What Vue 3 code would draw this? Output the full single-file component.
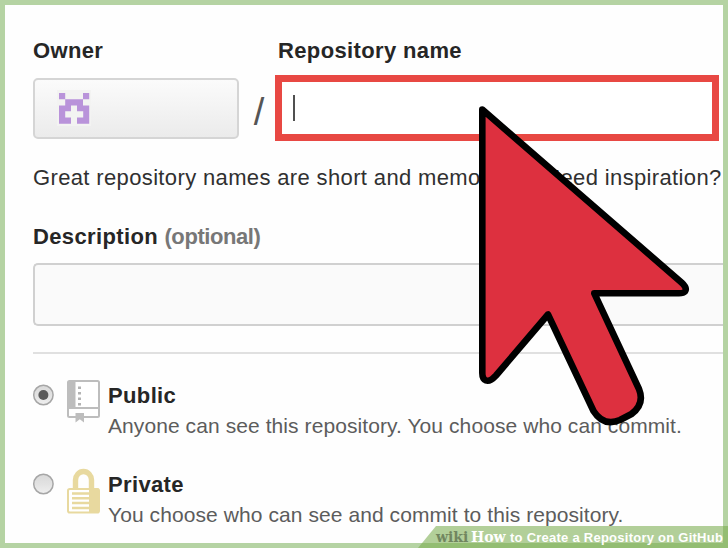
<script setup>
import { ref } from 'vue'

const visibility = ref('public')
const options = [
  { id: 'public', name: 'Public', note: 'Anyone can see this repository. You choose who can commit.' },
  { id: 'private', name: 'Private', note: 'You choose who can see and commit to this repository.' },
]
</script>

<template>
  <div class="frame">
    <form class="form" @submit.prevent>
      <div class="names">
        <div class="owner">
          <div class="label">Owner</div>
          <div class="owner-button">
            <svg class="avatar" width="34" height="36" viewBox="0 0 34 36">
              <rect width="34" height="36" fill="#f3f3f2" />
              <path fill="#b993da" d="M2 3h6.200v6.200H2zM26 3h6.200v6.200H26zM8.200 9.200H26v6.200h6.200v18.300H20v-6.200h6.200v-6.200H20v-5.900h-6v5.900H8.200v6.200H14v6.200H2V15.400h6.200z" />
            </svg>
          </div>
        </div>
        <div class="slash">/</div>
        <div class="repo">
          <div class="label repo-label">Repository name</div>
          <div class="repo-input"><span class="caret"></span></div>
        </div>
      </div>
      <p class="hint">Great repository names are short and memorable. Need inspiration?</p>
      <div class="label">Description <span class="optional">(optional)</span></div>
      <div class="description"></div>
      <div class="rule"></div>
      <div class="options">
        <div v-for="o in options" :key="o.id" class="option" @click="visibility = o.id">
          <svg class="radio" width="22" height="22" viewBox="0 0 22 22">
            <defs>
              <linearGradient :id="'shade-' + o.id" x1="0" y1="0" x2="0" y2="1">
                <stop offset="0" stop-color="#d9d9d9" />
                <stop offset=".5" stop-color="#e2e2e2" />
                <stop offset="1" stop-color="#efefef" />
              </linearGradient>
            </defs>
            <circle cx="11.400" cy="11" r="9.700" :fill="`url(#shade-${o.id})`" stroke="#a6a6a6" stroke-width="1.500" />
            <circle v-if="visibility === o.id" cx="11.400" cy="11" r="5" fill="#5b5b5b" />
          </svg>
          <svg v-if="o.id === 'public'" class="icon" width="33" height="46" viewBox="0 0 33 46">
            <rect x="1" y="2" width="31" height="36" rx="1.500" fill="#fff" stroke="#bdbdbd" stroke-width="2" />
            <path fill="#bdbdbd" d="M1 2h7.500v27.500H1zM1 28h31v2H1zM8.500 34h8.500v9.500l-4.200-3.300-4.300 3.300z" />
            <path fill="#b3b3b3" d="M11 7.500h3v2.600h-3zM11 13h3v2.600h-3zM11 18.500h3v2.600h-3zM11 24h3v2.600h-3z" />
          </svg>
          <svg v-else class="icon" width="33" height="46" viewBox="0 0 33 46">
            <path d="M8.500 21.500V12a8 8.500 0 0 1 16 0v9.500" fill="none" stroke="#e8d99f" stroke-width="5.400" />
            <rect x="1" y="21" width="31" height="23.500" rx="1.800" fill="#fff" stroke="#e8d99f" stroke-width="2" />
            <path fill="#e8d99f" d="M22 20.500h10v24H22zM5 24.300h17v2.500H5zM5 29h17v2.500H5zM5 33.800h17v2.500H5zM5 38.700h17v2.500H5z" />
          </svg>
          <div class="text">
            <div class="label">{{ o.name }}</div>
            <div class="note">{{ o.note }}</div>
          </div>
        </div>
      </div>
    </form>

    <svg class="pointer" width="220" height="330" viewBox="474 100 220 330">
      <path
        d="M482.300 109.500L681.500 282.500Q687.500 288 685 291.500Q683.500 293.300 679 293.300H594.300L639 389Q645 404 631.500 414L620 420Q603.500 427 593.500 411L548 314.500L496 375.500Q490 382 486 380.500Q482.300 379 482.300 373Z"
        fill="#dd303f" stroke="#000" stroke-width="6.600" stroke-linejoin="round"
      />
    </svg>

    <div class="watermark">
      <span class="wiki">wiki</span><span class="how">How</span><span class="title">to Create a Repository on GitHub</span>
    </div>
  </div>
</template>

<style>
body {
  margin: 0;
  background: #fff;
}
</style>

<style scoped>
.frame {
  position: relative;
  box-sizing: border-box;
  width: 728px;
  height: 548px;
  border: 5px solid #b5d3a3;
  background: #fefefe;
  font-family: "Liberation Sans", Arial, sans-serif;
  white-space: nowrap;
}
.form {
  box-sizing: border-box;
  height: 538px;
  padding: 33px 0 0 28px;
  overflow: hidden;
}
.label {
  font-size: 22px;
  line-height: 26px;
  font-weight: 700;
  letter-spacing: 0.36px;
  color: #262626;
}
.names {
  display: flex;
  height: 103px;
}
.owner {
  width: 206px;
}
.owner-button {
  display: flex;
  align-items: center;
  box-sizing: border-box;
  height: 61px;
  margin-top: 14px;
  padding: 0 0 2px 22px;
  border: 2px solid #d5d5d5;
  border-radius: 5px;
  background: linear-gradient(#fbfbfb, #ebebeb);
}
.avatar {
  display: block;
}
.slash {
  width: 36px;
  padding-top: 53px;
  font-size: 38px;
  line-height: 42px;
  text-align: center;
  text-indent: 4px;
  color: #555;
}
.repo {
  width: 444px;
}
.repo-label {
  padding-left: 3px;
}
.repo-input {
  display: flex;
  align-items: center;
  box-sizing: border-box;
  height: 66px;
  margin-top: 11px;
  padding-left: 11px;
  border: 7px solid #e84843;
  background: #fff;
}
.caret {
  width: 2px;
  height: 26px;
  background: #505050;
}
.hint {
  margin: 24px 0 33px;
  font-size: 22px;
  line-height: 26px;
  letter-spacing: 0.36px;
  color: #303030;
}
.optional {
  letter-spacing: -0.42px;
  color: #777;
}
.description {
  box-sizing: border-box;
  height: 63px;
  margin-top: 13px;
  border: 2px solid #d0d0d0;
  border-right: 0;
  border-radius: 5px 0 0 5px;
  background: #fafafa;
}
.rule {
  height: 2px;
  margin-top: 26px;
  background: #e0e0e0;
}
.options {
  display: flex;
  flex-direction: column;
  gap: 33px;
  padding-top: 29px;
}
.option {
  display: flex;
  height: 56px;
}
.radio {
  flex: none;
  margin: 1px 12px 0 -1px;
}
.icon {
  flex: none;
  margin: -4px 8px 0 1px;
}
.note {
  margin-top: 4px;
  font-size: 21px;
  line-height: 26px;
  letter-spacing: 0.08px;
  color: #5c5c5c;
}
.pointer {
  position: absolute;
  left: 469px;
  top: 95px;
}
.watermark {
  position: absolute;
  right: -5px;
  bottom: -5px;
  display: flex;
  align-items: baseline;
  box-sizing: border-box;
  width: 310px;
  height: 22px;
  padding-left: 18px;
  line-height: 22px;
  color: #fff;
  background: rgba(122, 173, 80, 0.58);
  clip-path: polygon(18px 0, 100% 0, 100% 100%, 0 100%);
}
.wiki,
.how {
  font-family: "DejaVu Serif", serif;
  font-size: 14px;
  font-weight: 700;
}
.wiki {
  width: 35px;
  color: #71865f;
}
.how {
  width: 39px;
}
.title {
  font-size: 13px;
  font-weight: 700;
  letter-spacing: 0.25px;
}
</style>
